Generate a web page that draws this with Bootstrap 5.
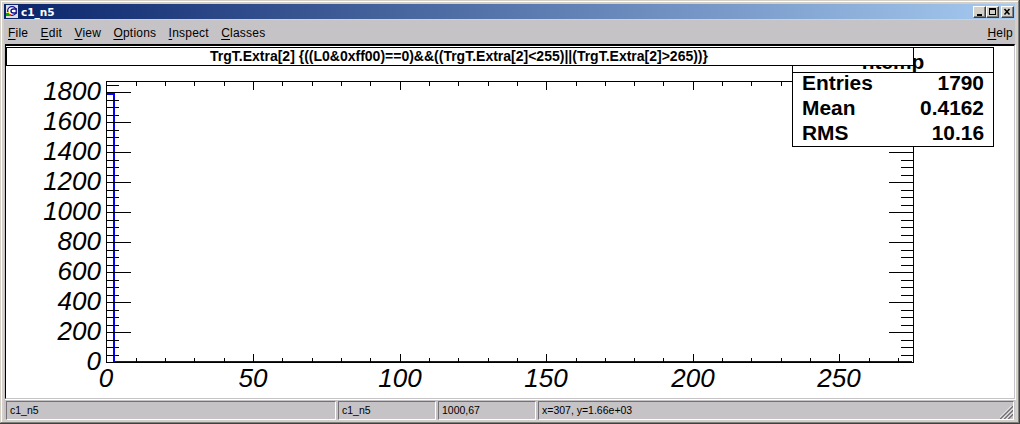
<!DOCTYPE html>
<html lang="en">
<head>
<meta charset="utf-8">
<title>c1_n5</title>
<link rel="stylesheet" href="https://cdn.jsdelivr.net/npm/bootstrap@5.3.0/dist/css/bootstrap.min.css">
<style>
body{width:1020px;height:424px;overflow:hidden;font-family:"Liberation Sans",Arial,sans-serif;color:#000;background:#404040;line-height:1}
.win{width:1019px;height:423px;background:#c6c3c6;border:1px solid #d4d0c8;border-right-color:#808080;border-bottom-color:#808080;box-shadow:inset 1px 1px #fff,inset 0 0 0 3px #d4d0c8;padding:3px 3px 3px 3px}
.titlebar{height:15px;background:linear-gradient(90deg,#0a246a,#a6caf0);color:#fff;padding:0 1px 0 2px}
.caption{font:bold 10.5px "DejaVu Sans",sans-serif;margin-left:3px;line-height:16px}
.wbtn{width:13px;height:12px;background:#d4d0c8;border:1px solid;border-color:#fff #404040 #404040 #fff;box-shadow:inset -1px -1px #808080}
.menubar{height:25px;padding:0 2px 0 4px;font-size:12px;letter-spacing:.22px;line-height:26px;border-top:1px solid #d4d0c8}
.menubar .mi{margin-right:12.3px}
.menubar u{text-underline-offset:2px;text-decoration-thickness:1px}
.canvas{height:355px;margin:0 0 0 1px;background:#fff;border:solid;border-width:2px 1px 1px 1px;border-color:#000 #c6c3c6 #c6c3c6 #000;box-shadow:0 1px #fff,1px 1px #fff}
.pave{background:#fff;border:1px solid #000;font-weight:bold}
.ptitle{left:0;top:1px;width:908px;height:19px;font-size:14px;line-height:17px;padding-right:2px}
.stats{left:786px;top:1px;width:202px;height:100px;font-size:20.9px}
.stats .hd{height:25px;border-bottom:1px solid #000;line-height:27px}
.stats .ln{height:25px;padding:0 9px;line-height:19px}
.status{height:19px;margin:2px 1px 0 2px;gap:2px;font-size:10.5px;line-height:17px}
.cell{border:1px solid;border-color:#737173 #fff #fff #737173;padding-left:3px;white-space:pre}
</style>
</head>
<body>
<div class="win">
  <div class="titlebar d-flex align-items-center">
    <svg width="12" height="13" viewBox="0 0 12 13"><rect width="12" height="13" fill="#dedbde"/><circle cx="6" cy="6" r="4.300" fill="#fff" stroke="#10108c" stroke-width="1.300"/><path d="M11 4H7.500Q5 4 5 6T7.500 8H11" fill="none" stroke="#10108c" stroke-width="1.400"/><path d="M0 8h3v3H0z" fill="#0a0"/><path d="M3 9h2v2H3z" fill="#e33"/><path d="M1 7h2v1H1z" fill="#fe0"/></svg>
    <span class="caption">c1_n5</span>
    <div class="d-flex ms-auto">
      <svg class="wbtn" viewBox="0 0 11 10"><path d="M3 7h5v2H3z"/></svg>
      <svg class="wbtn" viewBox="0 0 11 10"><path d="M2 1h7v7H2zM3 3v4h5V3z" fill-rule="evenodd"/></svg>
      <svg class="wbtn" style="margin-left:2px" viewBox="0 0 11 10"><path d="M2.500 2l5 5.500M7.500 2l-5 5.500" stroke="#000" stroke-width="1.600"/></svg>
    </div>
  </div>
  <nav class="menubar d-flex">
    <span class="mi"><u>F</u>ile</span><span class="mi"><u>E</u>dit</span><span class="mi"><u>V</u>iew</span><span class="mi"><u>O</u>ptions</span><span class="mi"><u>I</u>nspect</span><span class="mi"><u>C</u>lasses</span><span class="ms-auto"><u>H</u>elp</span>
  </nav>
  <main class="canvas position-relative">
    <svg id="plot" class="d-block" width="1008" height="352" viewBox="6 46 1008 352"></svg>
    <div class="pave stats position-absolute"><div class="hd text-center">htemp</div>
      <div class="ln d-flex justify-content-between"><span>Entries</span><span>1790</span></div>
      <div class="ln d-flex justify-content-between"><span>Mean</span><span>0.4162</span></div>
      <div class="ln d-flex justify-content-between"><span>RMS</span><span>10.16</span></div>
    </div>
    <div class="pave ptitle position-absolute text-center">TrgT.Extra[2] {((L0&amp;0xff00)==0)&amp;&amp;((TrgT.Extra[2]&lt;255)||(TrgT.Extra[2]&gt;265))}</div>
  </main>
  <footer class="status d-flex">
    <div class="cell" style="width:330px">c1_n5</div><div class="cell" style="width:98px">c1_n5</div><div class="cell" style="width:98px">1000,67</div><div class="cell flex-grow-1 position-relative">x=307, y=1.66e+03<svg class="position-absolute end-0 bottom-0" width="13" height="13"><path d="M0 13L13 0M4 13L13 4M8 13L13 8" stroke="#737173" stroke-width="1.6"/><path d="M-1.500 13L13-1.500M2.500 13L13 2.500M6.500 13L13 6.500" stroke="#fff"/></svg></div>
  </footer>
</div>
<script src="https://cdn.jsdelivr.net/npm/bootstrap@5.3.0/dist/js/bootstrap.bundle.min.js"></script>
<script>
const L=106,R=913,T=81,B=362;let d='',t='';
for(let i=0;i<=27;i++){const x=Math.floor(106.9+i*29.32),n=i%5?4:8;d+=`M${x+.5} ${B}v${-n}M${x+.5} ${T+1}v${n}`;
 if(i%5==0)t+=`<text x="${x}" y="387" text-anchor="middle">${i*10}</text>`}
for(let i=0;i<=37;i++){const y=Math.round(B-i*7.5),n=i%4?12:24;d+=`M${L+1} ${y+.5}h${n}M${R} ${y+.5}h${-n}`;
 if(i%4==0)t+=`<text x="101" y="${y+8}" text-anchor="end">${i*50}</text>`}
document.getElementById('plot').innerHTML=`<path d="M107 94H114V362H912" fill="none" stroke="#00f" stroke-width="2" shape-rendering="crispEdges"/><path d="M106.500 81.500H913.500V362.500H106.500Z${d}" fill="none" stroke="#000" shape-rendering="crispEdges"/><g font-size="26" font-style="italic">${t}</g>`;
</script>
</body>
</html>
